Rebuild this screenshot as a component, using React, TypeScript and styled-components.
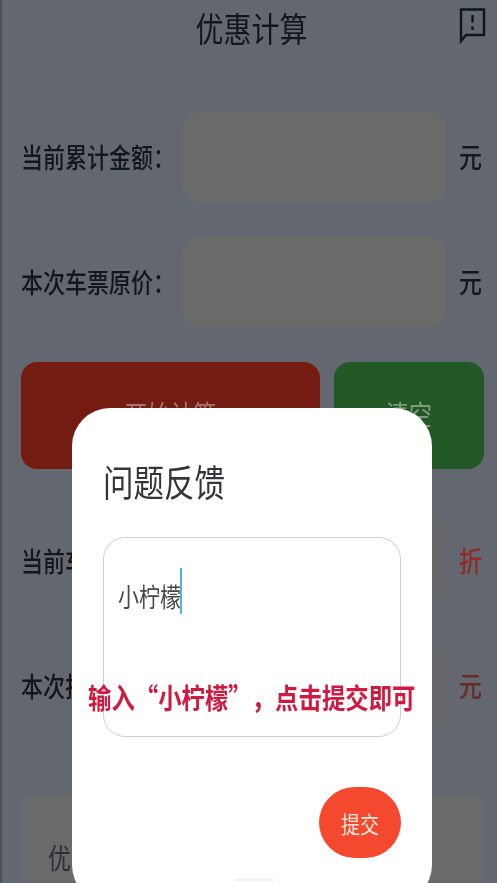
import React from "react";
import styled, { createGlobalStyle, css } from "styled-components";

const GlobalStyle = createGlobalStyle`
    html, body {
        margin: 0;
        padding: 0;
        height: 100%;
        background: #63676f;
    }
`;

const fontStack = `"Noto Sans CJK SC", "Noto Sans", sans-serif`;

// The shot is squeezed sideways, so glyphs come out taller than they are wide
const tallText = css`
    display: inline-block;
    transform: scaleY(1.22);
`;

const Screen = styled.div`
    position: relative;
    width: 497px;
    height: 883px;
    overflow: hidden;
    background: #63676f;
    border-left: 2px solid #4c4f56;
    box-sizing: border-box;
    font-family: ${fontStack};
    color: #14161a;
    filter: blur(0.5px);
`;

const Header = styled.header`
    display: flex;
    justify-content: center;
    align-items: center;
    height: 54px;
    padding-left: 4px;
    position: relative;
`;

const Title = styled.h1`
    ${tallText}
    margin: 0;
    font-size: 28px;
    font-weight: 400;
    line-height: 54px;
`;

const FeedbackIcon = styled.svg`
    position: absolute;
    right: 10px;
    top: 6px;
    width: 28px;
    height: 38px;
`;

const Form = styled.div`
    display: flex;
    flex-direction: column;
    padding: 58px 13px 0 19px;
`;

const Row = styled.div<{ $gap: number }>`
    display: flex;
    align-items: center;
    height: 90px;
    margin-bottom: ${(p) => p.$gap}px;
`;

const Label = styled.span`
    width: 162px;
`;

const LabelText = styled.span`
    ${tallText}
    font-size: 22px;
    font-weight: 500;
    white-space: nowrap;
    line-height: 30px;
    margin-top: -3px;
`;

const Field = styled.div<{ $muted?: boolean }>`
    width: 263px;
    height: 100%;
    border-radius: 16px;
    background: ${(p) => (p.$muted ? "#65676a" : "#6a6a69")};
`;

const Unit = styled.span<{ $color?: string }>`
    ${tallText}
    margin: -3px 0 0 13px;
    font-size: 23px;
    font-weight: 500;
    color: ${(p) => p.$color ?? "#14161a"};
`;

const Actions = styled.div`
    display: flex;
    gap: 14px;
    height: 107px;
    margin-bottom: 47px;
`;

const ActionButton = styled.button<{ $bg: string; $width: number; $color: string }>`
    width: ${(p) => p.$width}px;
    height: 100%;
    border: 0;
    border-radius: 16px;
    background: ${(p) => p.$bg};
    color: ${(p) => p.$color};
    font-family: inherit;
    padding: 0;
`;

const ActionLabel = styled.span`
    ${tallText}
    font-size: 23px;
    margin-top: -4px;
`;

const ResultCard = styled.div`
    height: 130px;
    border-radius: 14px;
    background: #696a6c;
    margin-top: 63px;
    padding: 46px 0 0 27px;
    box-sizing: border-box;
    color: #2c2e32;
    line-height: 34px;
`;

const ResultText = styled.span`
    ${tallText}
    font-size: 23px;
`;

const Dialog = styled.section`
    position: absolute;
    left: 70px;
    top: 408px;
    width: 360px;
    height: 495px;
    box-sizing: border-box;
    border-radius: 38px;
    background: #ffffff;
    padding: 49px 31px 0 31px;
`;

const DialogTitle = styled.h2`
    ${tallText}
    margin: 0 0 32px;
    font-size: 30.5px;
    font-weight: 400;
    line-height: 48px;
    color: #33363a;
`;

const TextArea = styled.div`
    height: 200px;
    width: 298px;
    box-sizing: border-box;
    border: 1.5px solid #cfcfcf;
    border-radius: 22px;
    padding: 40px 14px 0;
    display: flex;
    align-items: flex-start;
    line-height: 36px;
    color: #44474b;
`;

const TypedText = styled.span`
    ${tallText}
    font-size: 21px;
`;

const Caret = styled.span`
    display: inline-block;
    width: 2px;
    height: 46px;
    margin: -10px 0 0 -1px;
    background: #55aee0;
`;

const DialogFooter = styled.div`
    display: flex;
    justify-content: flex-end;
    margin-top: 50px;
`;

const SubmitButton = styled.button`
    width: 82px;
    height: 71px;
    border: 0;
    border-radius: 36px;
    background: #f4482f;
    color: #ffe9df;
    font-family: inherit;
    padding: 0;
`;

const SubmitLabel = styled.span`
    ${tallText}
    font-size: 19px;
`;

const Hint = styled.div`
    ${tallText}
    position: absolute;
    left: 86px;
    top: 677px;
    font-size: 23.4px;
    font-weight: 700;
    line-height: 40px;
    color: #d01a42;
    white-space: nowrap;
`;

// Quote marks take a full em here, the font's own are narrower
const Quote = styled.span<{ $open?: boolean }>`
    display: inline-block;
    width: 1em;
    text-align: ${(p) => (p.$open ? "right" : "left")};
`;

const HomeBar = styled.div`
    position: absolute;
    left: 162px;
    top: 471px;
    width: 40px;
    height: 2px;
    border-radius: 1px;
    background: #f0f0f0;
`;

const App: React.FC = () => (
    <>
        <GlobalStyle />
        <Screen>
            <Header>
                <Title>优惠计算</Title>
                <FeedbackIcon viewBox="0 0 28 38" fill="none">
                    <path d="M2 3.5H25V29H7L2 35Z" stroke="#121418" strokeWidth="2.4" />
                    <path d="M13.5 9V16.5" stroke="#121418" strokeWidth="2.4" />
                    <path d="M13.5 20.5V24" stroke="#121418" strokeWidth="2.4" />
                </FeedbackIcon>
            </Header>
            <Form>
                <Row $gap={35}>
                    <Label>
                        <LabelText>当前累计金额：</LabelText>
                    </Label>
                    <Field />
                    <Unit>元</Unit>
                </Row>
                <Row $gap={35}>
                    <Label>
                        <LabelText>本次车票原价：</LabelText>
                    </Label>
                    <Field />
                    <Unit>元</Unit>
                </Row>
                <Actions>
                    <ActionButton $bg="#741c12" $width={299} $color="#a8766e">
                        <ActionLabel>开始计算</ActionLabel>
                    </ActionButton>
                    <ActionButton $bg="#225726" $width={150} $color="#7d9c7e">
                        <ActionLabel>清空</ActionLabel>
                    </ActionButton>
                </Actions>
                <Row $gap={35}>
                    <Label>
                        <LabelText>当前车</LabelText>
                    </Label>
                    <Field $muted />
                    <Unit $color="#8f2a26">折</Unit>
                </Row>
                <Row $gap={0}>
                    <Label>
                        <LabelText>本次折</LabelText>
                    </Label>
                    <Field $muted />
                    <Unit $color="#6b2a26">元</Unit>
                </Row>
                <ResultCard>
                    <ResultText>优</ResultText>
                </ResultCard>
            </Form>
            <Dialog>
                <DialogTitle>问题反馈</DialogTitle>
                <TextArea>
                    <TypedText>小柠檬</TypedText>
                    <Caret />
                </TextArea>
                <DialogFooter>
                    <SubmitButton>
                        <SubmitLabel>提交</SubmitLabel>
                    </SubmitButton>
                </DialogFooter>
                <HomeBar />
            </Dialog>
            <Hint>
                输入<Quote $open>“</Quote>小柠檬<Quote>”</Quote>，点击提交即可
            </Hint>
        </Screen>
    </>
);

export default App;
